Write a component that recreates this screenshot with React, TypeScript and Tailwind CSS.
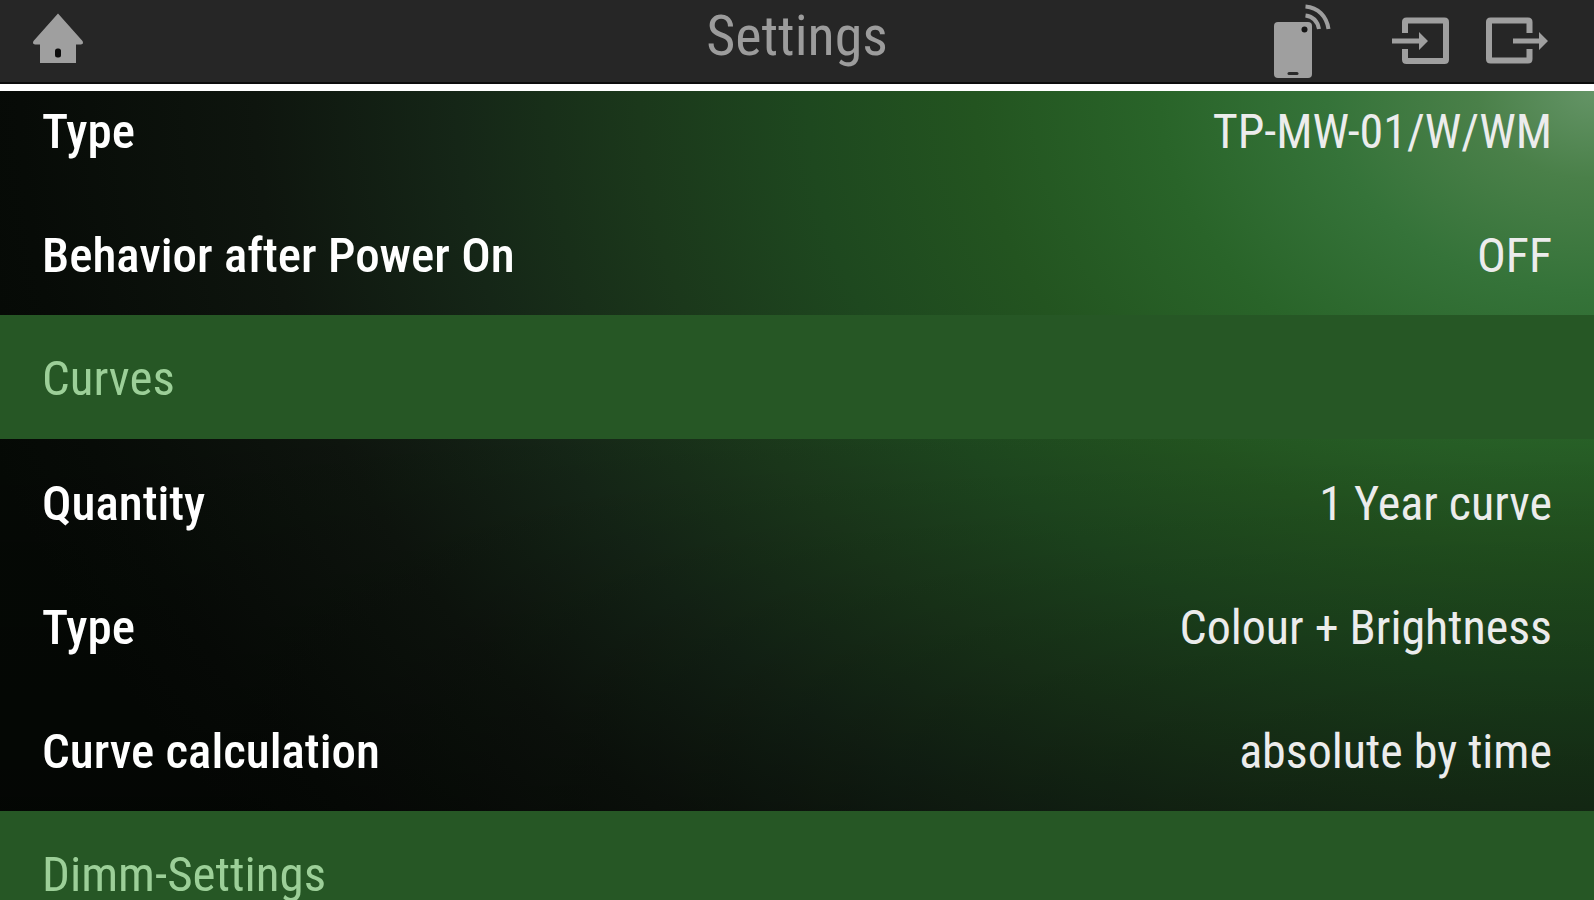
type Item = { label: string; value: string };
type Section = { title?: string; items: Item[] };

const sections: Section[] = [
  {
    items: [
      { label: 'Type', value: 'TP-MW-01/W/WM' },
      { label: 'Behavior after Power On', value: 'OFF' },
    ],
  },
  {
    title: 'Curves',
    items: [
      { label: 'Quantity', value: '1 Year curve' },
      { label: 'Type', value: 'Colour + Brightness' },
      { label: 'Curve calculation', value: 'absolute by time' },
    ],
  },
  { title: 'Dimm-Settings', items: [] },
];

function HomeIcon() {
  return (
    <svg width="52" height="52" viewBox="0 0 52 52" aria-hidden="true">
      <path
        d="M26 1.500 50.500 29Q52 32 49 32.500H44V51H8V32.500H3Q0 32 1.500 29Z"
        fill="#9f9f9f"
      />
      <rect x="23" y="36.500" width="6" height="9" rx="2.500" fill="#0c0c0c" />
    </svg>
  );
}

function RemoteIcon() {
  return (
    <svg width="60" height="76" viewBox="0 0 60 76" aria-hidden="true">
      <rect x="2" y="19" width="38" height="56" rx="4" fill="#9f9f9f" />
      <circle cx="32.500" cy="26.500" r="3" fill="#151515" />
      <rect x="15.500" y="69" width="11" height="3" rx="1.500" fill="#2a2a2a" />
      <g fill="none" stroke="#9f9f9f" strokeWidth="4">
        <path d="M33.500 3.500C46 4.500 54.500 13 56.500 26" />
        <path d="M33.500 12.500C41 13.500 45.500 18 47 26" />
      </g>
    </svg>
  );
}

function ImportIcon() {
  return (
    <svg width="60" height="52" viewBox="0 0 60 52" aria-hidden="true">
      <path
        d="M14 19V8Q14 6.500 15.500 6.500H53.500Q55 6.500 55 8V45.500Q55 47 53.500 47H15.500Q14 47 14 45.500V35"
        fill="none"
        stroke="#9f9f9f"
        strokeWidth="6"
      />
      <path d="M1 24.500H28V18L37 27 28 36V29.500H1Z" fill="#9f9f9f" />
    </svg>
  );
}

function ExportIcon() {
  return (
    <svg width="66" height="52" viewBox="0 0 66 52" aria-hidden="true">
      <path
        d="M46.500 19V8Q46.500 6.500 45 6.500H7.500Q6 6.500 6 8V45Q6 46.500 7.500 46.500H45Q46.500 46.500 46.500 45V35"
        fill="none"
        stroke="#9f9f9f"
        strokeWidth="6"
      />
      <path d="M30 24.500H56V18L65 27 56 36V29.500H30Z" fill="#9f9f9f" />
    </svg>
  );
}

function Header() {
  return (
    <header className="relative z-10 grid h-[91px] shrink-0 grid-cols-[1fr_auto_1fr] items-start border-b-[7px] border-white bg-[#262626] px-8 shadow-[inset_0_-2px_0_#0c0c0c]">
      <button type="button" aria-label="Home" className="mt-3 justify-self-start">
        <HomeIcon />
      </button>
      <h1 className="pt-1 text-[56px] leading-[64px] font-normal text-[#9c9c9c]">Settings</h1>
      <div className="mr-[13px] flex items-start justify-self-end">
        <button type="button" aria-label="Remote access" className="mt-[3px] mr-[59px]">
          <RemoteIcon />
        </button>
        <button type="button" aria-label="Import" className="mt-[14px] mr-8">
          <ImportIcon />
        </button>
        <button type="button" aria-label="Export" className="mt-[14px]">
          <ExportIcon />
        </button>
      </div>
    </header>
  );
}

function Row({ label, value }: Item) {
  return (
    <div className="flex h-31 items-center justify-between px-[42px] pt-[6px]">
      <dt className="text-[49px] font-medium text-white">{label}</dt>
      <dd className="text-[48px] text-[#ececec]">{value}</dd>
    </div>
  );
}

export default function App() {
  return (
    <div className="flex h-screen flex-col overflow-hidden bg-black font-['Roboto_Condensed',Roboto,sans-serif]">
      <Header />
      <main className="min-h-0 flex-1 overflow-hidden bg-[linear-gradient(to_bottom,rgba(0,0,0,0)_40%,rgba(0,0,0,0.35)_95%),radial-gradient(105%_155%_at_100%_0%,#649466_0%,#4a8049_7%,#357339_16%,#296429_26%,#235420_37%,#1e481f_47%,#1b381b_57%,#152617_68%,#0e150e_80%,#070b07_94%,#050905_100%)]">
        <div className="-mt-6 leading-[48px]">
          {sections.map((section, index) => (
            <section key={index}>
              {section.title && (
                <h2 className="flex h-31 items-center bg-[#265725] px-[42px] pt-1 text-[49px] text-[#9ccf98]">
                  {section.title}
                </h2>
              )}
              <dl>
                {section.items.map((item) => (
                  <Row key={item.label} {...item} />
                ))}
              </dl>
            </section>
          ))}
        </div>
      </main>
    </div>
  );
}
